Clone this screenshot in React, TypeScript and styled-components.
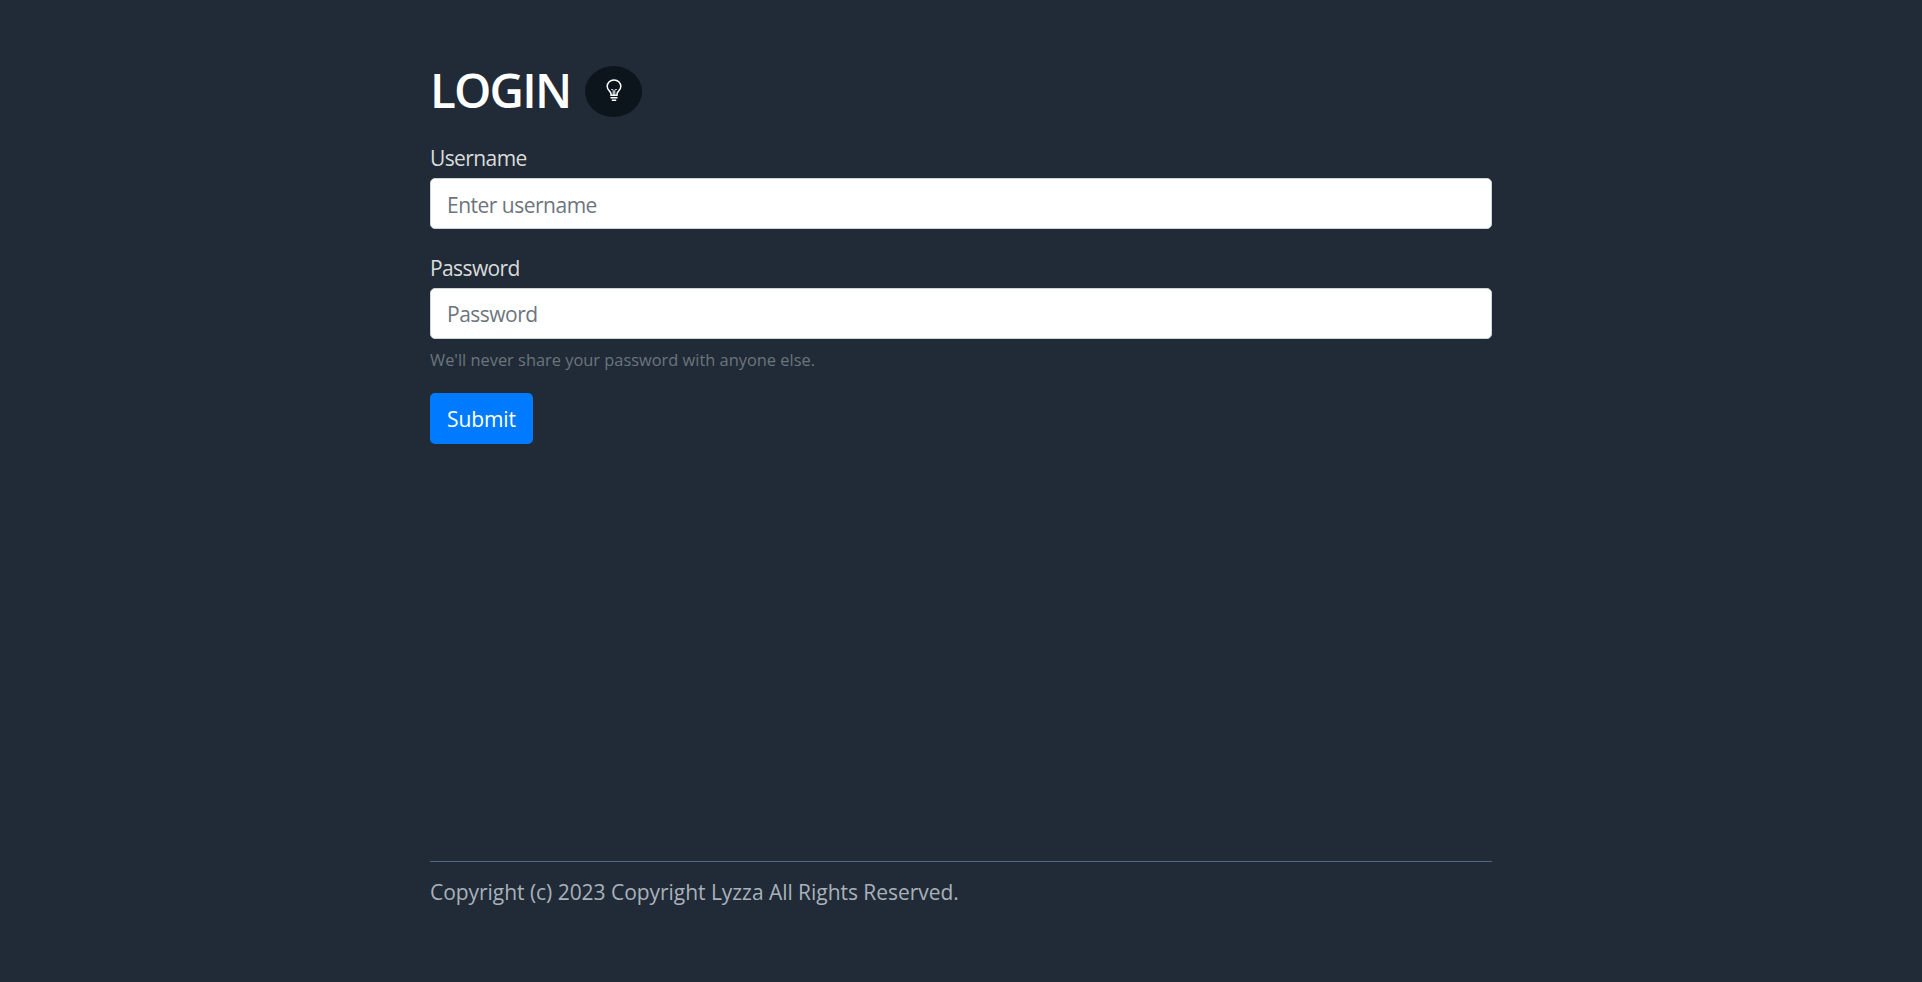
import React from "react";
import styled, { createGlobalStyle } from "styled-components";

const GlobalStyle = createGlobalStyle`
  *, *::before, *::after { box-sizing: border-box; }
  body {
    margin: 0;
    background: #202b37;
    color: #dbdbdb;
    font: 400 21px/33px "Open Sans", "Noto Sans", sans-serif;
  }
`;
const Page = styled.div`
  width: 1062px;
  min-height: 982px;
  margin: 0 auto;
  padding: 66px 0 62px;
  display: flex;
  flex-direction: column;
`;
const Header = styled.header`
  display: flex;
  align-items: center;
  height: 51px;
`;
const Title = styled.h1`
  width: 155px;
  margin: 0;
  padding-bottom: 4px;
  font: 600 47.5px/50px "Open Sans", sans-serif;
  letter-spacing: -1.8px;
  color: #fff;
`;
const ThemeToggle = styled.button`
  display: flex;
  align-items: center;
  justify-content: center;
  width: 57px;
  height: 51px;
  padding: 0 0 2px;
  border: 0;
  border-radius: 50%;
  background: #0c151c;
  color: #fff;
`;
const Form = styled.form`
  margin-top: 24px;
`;
const Field = styled.div`
  margin-bottom: 22px;
`;
const Label = styled.label`
  display: block;
  height: 37px;
  padding-top: 1px;
  letter-spacing: -0.6px;
`;
const Input = styled.input<{ $offset?: number }>`
  display: block;
  width: 100%;
  height: 51px;
  padding: ${(p) => p.$offset ?? 0}px 16px 0;
  border: 1px solid #ced4da;
  border-radius: 5px;
  background: #fff;
  font: inherit;
  letter-spacing: -0.5px;
  &::placeholder { color: #6c757d; opacity: 1; }
`;
const Hint = styled.small`
  display: block;
  height: 27px;
  margin-top: 5px;
  font-size: 16.4px;
  line-height: 32px;
  color: #6c757d;
`;
const Submit = styled.button`
  width: 103px;
  height: 51px;
  padding: 2px 0 0;
  border: 0;
  border-radius: 5px;
  background: #007bff;
  color: #fff;
  font: inherit;
  letter-spacing: -0.1px;
`;
const Footer = styled.footer`
  margin-top: auto;
  height: 59px;
  padding-top: 14px;
  border-top: 1px solid #526980;
  color: #a9b1ba;
  letter-spacing: -0.04px;
`;

function Bulb() {
  return (
    <svg width="16" height="23" viewBox="0 0 16 23" fill="none" stroke="currentColor" strokeWidth="1.5">
      <path d="M5 16.3V15C5 12.5 1.2 11.3 1.2 7.5A6.8 6.6 0 0 1 14.8 7.5C14.8 11.3 11 12.5 11 15V16.3Z" />
      <path d="M5.3 10.5H6.5C7 10.5 7.2 11 7.2 12V16M10.7 10.5H9.5C9 10.5 8.8 11 8.8 12V16" strokeWidth="1" />
      <path d="M4.5 18.8H11.5M5.8 21.3H10.2" strokeWidth="1.4" />
    </svg>
  );
}

export default function App() {
  return (
    <>
      <GlobalStyle />
      <Page>
        <Header>
          <Title>LOGIN</Title>
          <ThemeToggle type="button" aria-label="Toggle theme"><Bulb /></ThemeToggle>
        </Header>
        <Form>
          <Field>
            <Label htmlFor="username">Username</Label>
            <Input id="username" placeholder="Enter username" $offset={2} />
          </Field>
          <Field>
            <Label htmlFor="password">Password</Label>
            <Input id="password" type="password" placeholder="Password" />
            <Hint>We'll never share your password with anyone else.</Hint>
          </Field>
          <Submit type="button">Submit</Submit>
        </Form>
        <Footer>Copyright (c) 2023 Copyright Lyzza All Rights Reserved.</Footer>
      </Page>
    </>
  );
}
